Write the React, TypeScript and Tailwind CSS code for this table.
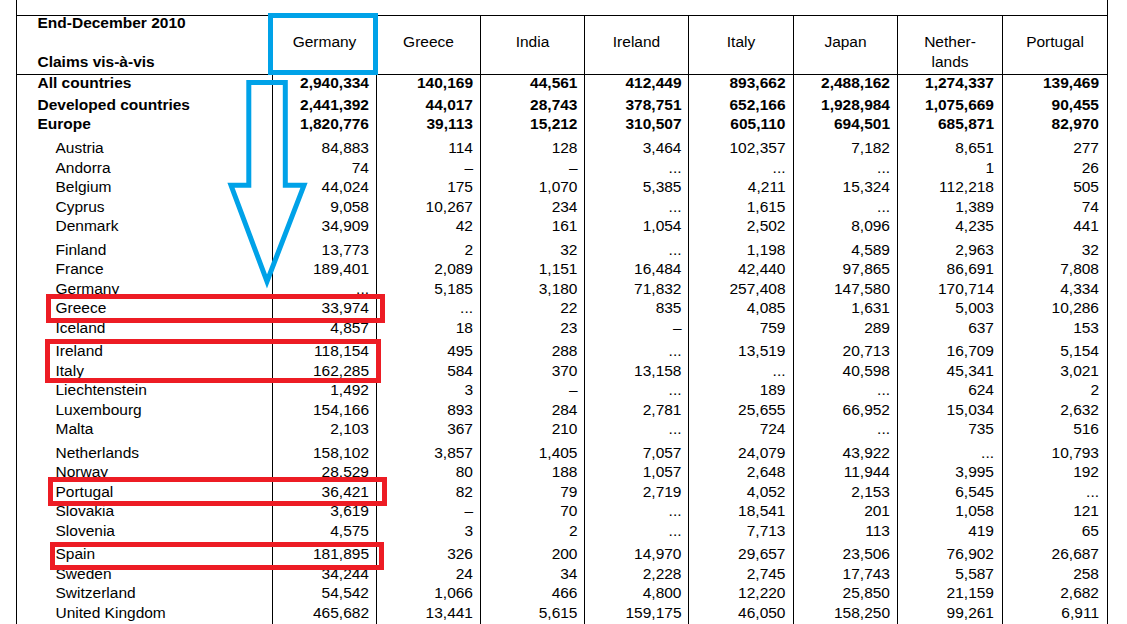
import React from "react";

const W = [
  "w-[104px]",
  "w-[104px]",
  "w-[104px]",
  "w-[104px]",
  "w-[105px]",
  "w-[104px]",
  "w-[105px]",
  "w-[105px]",
];
const PR = ["pr-[7px]", "pr-[7px]", "pr-[6.5px]", "pr-[6.5px]", "pr-[7.5px]", "pr-[7px]", "pr-[8px]", "pr-[8px]"];

const headers: React.ReactNode[] = [
  "Germany",
  "Greece",
  "India",
  "Ireland",
  "Italy",
  "Japan",
  <>
    Nether-
    <br />
    lands
  </>,
  "Portugal",
];

const boldRows: [string, string[]][] = [
  ["All countries", ["2,940,334", "140,169", "44,561", "412,449", "893,662", "2,488,162", "1,274,337", "139,469"]],
  ["Developed countries", ["2,441,392", "44,017", "28,743", "378,751", "652,166", "1,928,984", "1,075,669", "90,455"]],
  ["Europe", ["1,820,776", "39,113", "15,212", "310,507", "605,110", "694,501", "685,871", "82,970"]],
];

const countryRows: [string, string[]][] = [
  ["Austria", ["84,883", "114", "128", "3,464", "102,357", "7,182", "8,651", "277"]],
  ["Andorra", ["74", "–", "–", "...", "...", "...", "1", "26"]],
  ["Belgium", ["44,024", "175", "1,070", "5,385", "4,211", "15,324", "112,218", "505"]],
  ["Cyprus", ["9,058", "10,267", "234", "...", "1,615", "...", "1,389", "74"]],
  ["Denmark", ["34,909", "42", "161", "1,054", "2,502", "8,096", "4,235", "441"]],
  ["Finland", ["13,773", "2", "32", "...", "1,198", "4,589", "2,963", "32"]],
  ["France", ["189,401", "2,089", "1,151", "16,484", "42,440", "97,865", "86,691", "7,808"]],
  ["Germany", ["...", "5,185", "3,180", "71,832", "257,408", "147,580", "170,714", "4,334"]],
  ["Greece", ["33,974", "...", "22", "835", "4,085", "1,631", "5,003", "10,286"]],
  ["Iceland", ["4,857", "18", "23", "–", "759", "289", "637", "153"]],
  ["Ireland", ["118,154", "495", "288", "...", "13,519", "20,713", "16,709", "5,154"]],
  ["Italy", ["162,285", "584", "370", "13,158", "...", "40,598", "45,341", "3,021"]],
  ["Liechtenstein", ["1,492", "3", "–", "...", "189", "...", "624", "2"]],
  ["Luxembourg", ["154,166", "893", "284", "2,781", "25,655", "66,952", "15,034", "2,632"]],
  ["Malta", ["2,103", "367", "210", "...", "724", "...", "735", "516"]],
  ["Netherlands", ["158,102", "3,857", "1,405", "7,057", "24,079", "43,922", "...", "10,793"]],
  ["Norway", ["28,529", "80", "188", "1,057", "2,648", "11,944", "3,995", "192"]],
  ["Portugal", ["36,421", "82", "79", "2,719", "4,052", "2,153", "6,545", "..."]],
  ["Slovakia", ["3,619", "–", "70", "...", "18,541", "201", "1,058", "121"]],
  ["Slovenia", ["4,575", "3", "2", "...", "7,713", "113", "419", "65"]],
  ["Spain", ["181,895", "326", "200", "14,970", "29,657", "23,506", "76,902", "26,687"]],
  ["Sweden", ["34,244", "24", "34", "2,228", "2,745", "17,743", "5,587", "258"]],
  ["Switzerland", ["54,542", "1,066", "466", "4,800", "12,220", "25,850", "21,159", "2,682"]],
  ["United Kingdom", ["465,682", "13,441", "5,615", "159,175", "46,050", "158,250", "99,261", "6,911"]],
];

const boldHeights = ["h-[21.5px]", "h-[19.7px]", "h-[22.28px]"];

function BoldRow({ name, vals, h }: { name: string; vals: string[]; h: string }) {
  return (
    <div className={`flex shrink-0 font-bold leading-[16px] ${h}`}>
      <div className="w-[255px] shrink-0 pl-[20.5px]">{name}</div>
      {vals.map((v, i) => (
        <div key={i} className={`${W[i]} ${PR[i]} shrink-0 border-l border-black text-right`}>
          {v}
        </div>
      ))}
    </div>
  );
}

function CountryRow({
  name,
  vals,
  groupStart,
  last,
}: {
  name: string;
  vals: string[];
  groupStart: boolean;
  last: boolean;
}) {
  const rowH = last ? "flex-1" : groupStart ? "h-[23.7px]" : "h-[19.45px]";
  const pt = groupStart ? "pt-[4.25px]" : "";
  return (
    <div className={`flex shrink-0 leading-[19.45px] ${rowH}`}>
      <div className={`w-[255px] shrink-0 pl-[38.5px] ${pt}`}>{name}</div>
      {vals.map((v, i) => (
        <div key={i} className={`${W[i]} ${PR[i]} ${pt} shrink-0 border-l border-black text-right`}>
          {v}
        </div>
      ))}
    </div>
  );
}

export default function App() {
  return (
    <div
      className="relative h-[624px] w-[1127px] overflow-hidden bg-white text-[15.5px] text-black"
      style={{ fontFamily: '"Liberation Sans", Arial, sans-serif' }}
    >
      <div className="ml-[16px] flex h-full w-[1092px] flex-col border-x border-black">
        <div className="h-[15px] shrink-0" />
        <div className="flex flex-1 flex-col border-t border-black">
          {/* header */}
          <div className="flex h-[59px] shrink-0 border-b border-black">
            <div className="w-[255px] shrink-0 pl-[20.5px] font-bold leading-[20px]">
              <div className="-mt-[3.2px]">End-December 2010</div>
              <div className="mt-[19px]">Claims vis-à-vis</div>
            </div>
            {headers.map((h, i) => (
              <div key={i} className={`${W[i]} shrink-0 border-l border-black pt-[15.5px] text-center leading-[20px]`}>
                {h}
              </div>
            ))}
          </div>
          {/* body */}
          {boldRows.map(([n, v], i) => (
            <BoldRow key={n} name={n} vals={v} h={boldHeights[i]} />
          ))}
          {countryRows.map(([n, v], i) => (
            <CountryRow
              key={n}
              name={n}
              vals={v}
              groupStart={i > 0 && i % 5 === 0}
              last={i === countryRows.length - 1}
            />
          ))}
        </div>
      </div>

      {/* annotations */}
      <div className="absolute left-[268px] top-[13px] h-[62px] w-[110px] border-[5px] border-[#00A2E8]" />
      <svg className="absolute left-0 top-0" width="1127" height="624" viewBox="0 0 1127 624">
        <polygon
          points="248.8,82.5 285.3,82.5 285.3,185.3 304,185.3 267,281.5 231,185.3 248.8,185.3"
          fill="none"
          stroke="#00A2E8"
          strokeWidth="5"
          strokeLinejoin="miter"
        />
      </svg>
      <div className="absolute left-[46px] top-[294px] h-[29px] w-[339px] border-[5px] border-[#ED1C24]" />
      <div className="absolute left-[45px] top-[339px] h-[44px] w-[336px] border-[5px] border-[#ED1C24]" />
      <div className="absolute left-[48px] top-[477px] h-[29px] w-[339px] border-[5px] border-[#ED1C24]" />
      <div className="absolute left-[50px] top-[542px] h-[28px] w-[334px] border-[5px] border-[#ED1C24]" />
    </div>
  );
}
